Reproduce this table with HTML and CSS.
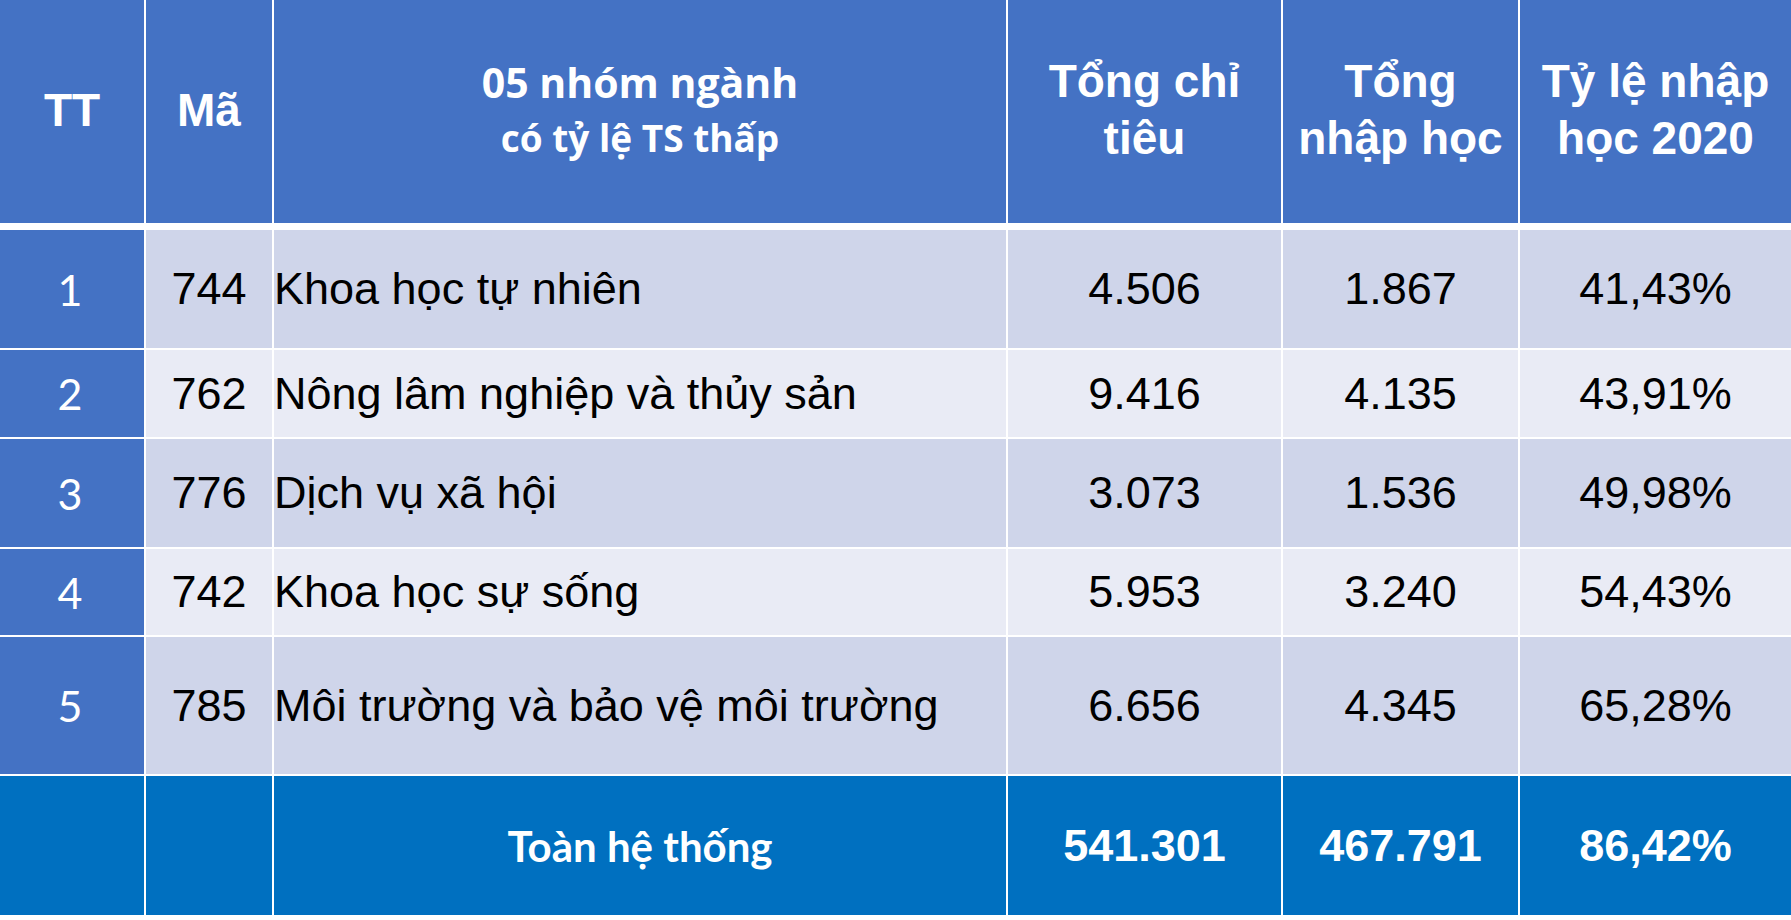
FILE: index.html
```html
<!DOCTYPE html>
<html lang="vi">
<head>
<meta charset="utf-8">
<title>05 nhóm ngành có tỷ lệ TS thấp</title>
<link rel="stylesheet" href="styles.css">
</head>
<body>
<div class="table">
  <div class="grid thead">
    <div class="cell th">TT</div>
    <div class="cell th">Mã</div>
    <div class="cell th th-cal"><span class="l1">05 nhóm ngành</span><span class="l2">có tỷ lệ TS thấp</span></div>
    <div class="cell th">Tổng chỉ<br>tiêu</div>
    <div class="cell th">Tổng<br>nhập học</div>
    <div class="cell th">Tỷ lệ nhập<br>học 2020</div>
  </div>
  <div class="grid tbody">
    <div class="row odd">
      <div class="cell idx">1</div>
      <div class="cell">744</div>
      <div class="cell name">Khoa học tự nhiên</div>
      <div class="cell">4.506</div>
      <div class="cell">1.867</div>
      <div class="cell">41,43%</div>
    </div>
    <div class="row even">
      <div class="cell idx">2</div>
      <div class="cell">762</div>
      <div class="cell name">Nông lâm nghiệp và thủy sản</div>
      <div class="cell">9.416</div>
      <div class="cell">4.135</div>
      <div class="cell">43,91%</div>
    </div>
    <div class="row odd">
      <div class="cell idx">3</div>
      <div class="cell">776</div>
      <div class="cell name">Dịch vụ xã hội</div>
      <div class="cell">3.073</div>
      <div class="cell">1.536</div>
      <div class="cell">49,98%</div>
    </div>
    <div class="row even">
      <div class="cell idx">4</div>
      <div class="cell">742</div>
      <div class="cell name">Khoa học sự sống</div>
      <div class="cell">5.953</div>
      <div class="cell">3.240</div>
      <div class="cell">54,43%</div>
    </div>
    <div class="row odd">
      <div class="cell idx">5</div>
      <div class="cell">785</div>
      <div class="cell name">Môi trường và bảo vệ môi trường</div>
      <div class="cell">6.656</div>
      <div class="cell">4.345</div>
      <div class="cell">65,28%</div>
    </div>
    <div class="row total">
      <div class="cell"></div>
      <div class="cell"></div>
      <div class="cell total-label">Toàn hệ thống</div>
      <div class="cell">541.301</div>
      <div class="cell">467.791</div>
      <div class="cell">86,42%</div>
    </div>
  </div>
</div>
</body>
</html>
```
FILE: styles.css
```css
html, body {
  margin: 0;
  padding: 0;
  background: #ffffff;
}

body {
  width: 1791px;
  height: 920px;
  overflow: hidden;
  font-family: "Liberation Sans", Arial, sans-serif;
}

.table {
  display: flex;
  flex-direction: column;
  gap: 7px;
}

.grid {
  display: grid;
  grid-template-columns: 144px 126px 732px 273px 235px 271px;
  column-gap: 2px;
}

.thead {
  grid-template-rows: 223px;
}

.tbody {
  grid-template-rows: 118px 87px 108px 86px 137px 139px;
  row-gap: 2px;
}

.row {
  display: contents;
}

.cell {
  display: flex;
  align-items: center;
  justify-content: center;
  text-align: center;
  font-size: 45px;
  color: #000000;
  white-space: nowrap;
}

.th {
  background: #4472C4;
  color: #ffffff;
  font-weight: bold;
  font-size: 46px;
  line-height: 57px;
  padding-bottom: 3px;
  box-sizing: border-box;
}

.th-cal {
  flex-direction: column;
  font-family: "Open Sans", Lato, sans-serif;
  line-height: 56px;
}

.th-cal .l1 {
  font-size: 41px;
}

.th-cal .l2 {
  font-size: 37px;
}

.odd > .cell {
  background: #CFD5EA;
}

.even > .cell {
  background: #E9EBF5;
}

.row > .idx {
  background: #4472C4;
  color: #ffffff;
  font-family: Lato, "Liberation Sans", sans-serif;
  font-size: 43px;
  padding-right: 4px;
}

.name {
  justify-content: flex-start;
  text-align: left;
}

.total > .cell {
  background: #0070C0;
  color: #ffffff;
  font-weight: bold;
  font-size: 45px;
}

.total > .total-label {
  font-family: Lato, "Liberation Sans", sans-serif;
  font-size: 42px;
}
```
